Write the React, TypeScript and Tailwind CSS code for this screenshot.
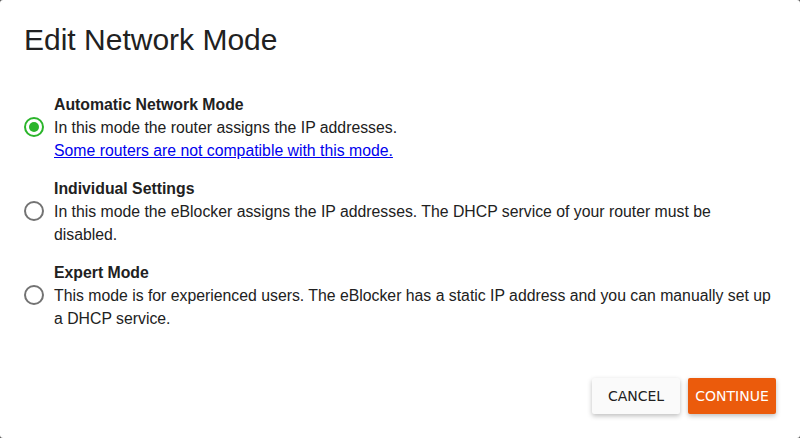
import React, { useState } from 'react';

const modes = [
    {
        id: 'auto',
        title: 'Automatic Network Mode',
        text: 'In this mode the router assigns the IP addresses.',
        link: 'Some routers are not compatible with this mode.',
    },
    {
        id: 'individual',
        title: 'Individual Settings',
        text: 'In this mode the eBlocker assigns the IP addresses. The DHCP service of your router must be disabled.',
    },
    {
        id: 'expert',
        title: 'Expert Mode',
        text: 'This mode is for experienced users. The eBlocker has a static IP address and you can manually set up a DHCP service.',
    },
];

const Radio = ({ checked }: { checked: boolean }) => (
    <div
        className={`w-5 h-5 rounded-full border-2 flex items-center justify-center shrink-0 ${
            checked ? 'border-[#2bb52b]' : 'border-[#737373]'
        }`}
    >
        {checked && <div className="w-[10px] h-[10px] rounded-full bg-[#2bb52b]" />}
    </div>
);

const App = () => {
    const [mode, setMode] = useState('auto');

    return (
        <div className="w-full h-screen bg-[#555]">
            <div className="w-full h-[438px] bg-white rounded-[3px] flex flex-col font-['Liberation_Sans',Arial,sans-serif] text-[#212121]">
                <h1 className="pt-[22px] pl-[24px] text-[30px] leading-[36px]">Edit Network Mode</h1>
                <div className="flex flex-col gap-[15px] mt-[35px] pl-[24px] pr-[24px]">
                    {modes.map((m) => (
                        <div key={m.id} className="flex items-start cursor-pointer" onClick={() => setMode(m.id)}>
                            <div className="w-[20px] mt-[24px] mr-[10px]">
                                <Radio checked={mode === m.id} />
                            </div>
                            <div className="flex flex-col text-[15.8px] leading-[23px]">
                                <span className="font-bold">{m.title}</span>
                                <span>{m.text}</span>
                                {m.link && <a className="text-[#0000ee] underline w-fit">{m.link}</a>}
                            </div>
                        </div>
                    ))}
                </div>
                <div className="mt-auto flex justify-end gap-[8px] pr-[24px] pb-[24px] font-['DejaVu_Sans',sans-serif] text-[14px]">
                    <button className="h-[36px] min-w-[88px] px-[6px] rounded-[2px] bg-[#fafafa] text-[#212121] shadow-[0_2px_5px_rgba(0,0,0,0.26)]">
                        CANCEL
                    </button>
                    <button className="h-[36px] min-w-[88px] px-[6px] rounded-[2px] bg-[#eb5b0c] text-white shadow-[0_2px_5px_rgba(0,0,0,0.26)]">
                        CONTINUE
                    </button>
                </div>
            </div>
        </div>
    );
};

export default App;
